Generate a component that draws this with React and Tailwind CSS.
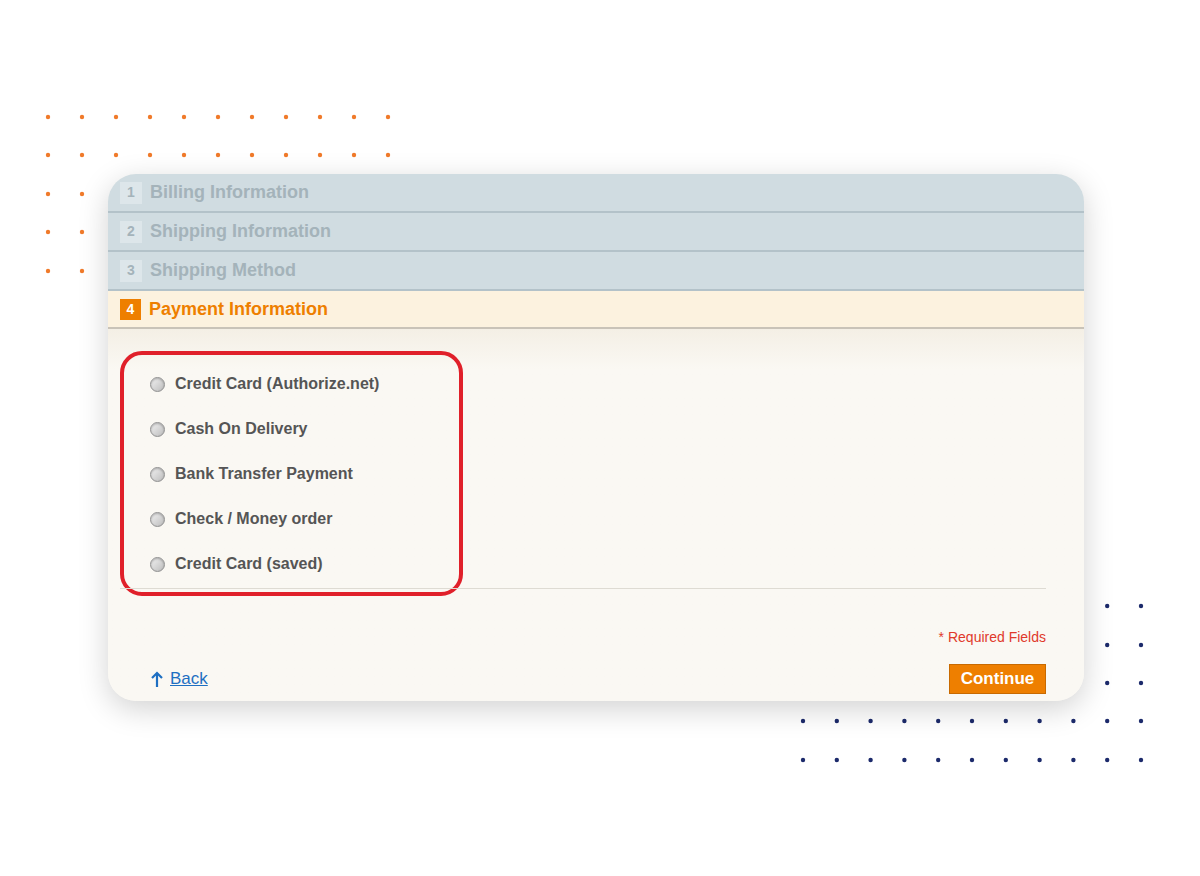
export default function App() {
  const orangeRows = [117, 155, 194, 232, 271];
  const navyRows = [606, 645, 683, 721, 760];
  const xsO = Array.from({ length: 11 }, (_, i) => 48 + i * 34);
  const xsN = Array.from({ length: 11 }, (_, i) => 803 + i * 33.8);
  const steps = [
    ["1", "Billing Information"],
    ["2", "Shipping Information"],
    ["3", "Shipping Method"],
  ];
  const opts = ["Credit Card (Authorize.net)", "Cash On Delivery", "Bank Transfer Payment", "Check / Money order", "Credit Card (saved)"];
  return (
    <div className="relative w-[1200px] h-[876px] bg-white overflow-hidden" style={{ fontFamily: "'Liberation Sans', Arial, sans-serif" }}>
      <svg className="absolute left-0 top-0" width="1200" height="876">
        {orangeRows.map((y) => xsO.map((x) => <circle key={x + "-" + y} cx={x} cy={y} r="2.2" fill="#f07a2a" />))}
        {navyRows.map((y) => xsN.map((x) => <circle key={x + "n" + y} cx={x} cy={y} r="2.2" fill="#1c2a6b" />))}
      </svg>
      <div className="absolute left-[108px] top-[174px] w-[976px] h-[527px] rounded-[28px] overflow-hidden bg-[#faf8f3] shadow-[0_8px_30px_rgba(0,0,0,0.18)] flex flex-col">
        {steps.map(([n, t]) => (
          <div key={n} className="h-[39px] shrink-0 bg-[#d0dce1] border-b-2 border-[#b3c2c9] flex items-center pl-[12px] gap-[8px]">
            <span className="w-[22px] h-[22px] bg-[#dde6ea] text-[#a4b3ba] text-[14px] font-bold flex items-center justify-center">{n}</span>
            <span className="text-[#a4b3ba] text-[18px] font-bold">{t}</span>
          </div>
        ))}
        <div className="h-[38px] shrink-0 bg-[#fcf2df] border-b-2 border-[#c9c3b8] flex items-center pl-[12px] gap-[8px]">
          <span className="w-[21px] h-[21px] bg-[#ee7f00] text-white text-[14px] font-bold flex items-center justify-center">4</span>
          <span className="text-[#ee7f00] text-[18px] font-bold">Payment Information</span>
        </div>
        <div className="flex-1 bg-gradient-to-b from-[#f4efe5] to-[#faf8f3] to-[40px] px-[12px] pt-[22px] flex flex-col">
          <div className="w-[343px] h-[245px] border-[4px] border-[#e0202a] rounded-[22px] pl-[26px] pt-[19px] flex flex-col gap-[25px]">
            {opts.map((o) => (
              <div key={o} className="flex items-center gap-[10px] h-[20px]">
                <span className="w-[15px] h-[15px] rounded-full border border-[#8f8f8f] bg-gradient-to-br from-[#f2f2f2] to-[#bdbdbd] shadow-[inset_0_1px_2px_rgba(0,0,0,0.25)]" />
                <span className="text-[#555] text-[16px] font-bold">{o}</span>
              </div>
            ))}
          </div>
          <div className="mt-[-8px] ml-0 mr-[26px] border-t border-[#dedbd3]" />
          <div className="mr-[26px] mt-[38px] text-right text-[#e0392b] text-[14px]">* Required Fields</div>
          <div className="mr-[26px] mt-[16px] flex items-center justify-between pl-[30px]">
            <a className="flex items-center gap-[6px] text-[#1e6fc2] text-[17px] underline">
              <svg width="14" height="18" viewBox="0 0 14 18"><path d="M7 17V3M2 8l5-5 5 5" stroke="#1e6fc2" strokeWidth="2.2" fill="none" /></svg>
              Back
            </a>
            <button className="w-[97px] h-[30px] bg-[#ee7f00] border border-[#c86a00] text-white font-bold text-[17px]">Continue</button>
          </div>
        </div>
      </div>
    </div>
  );
}
